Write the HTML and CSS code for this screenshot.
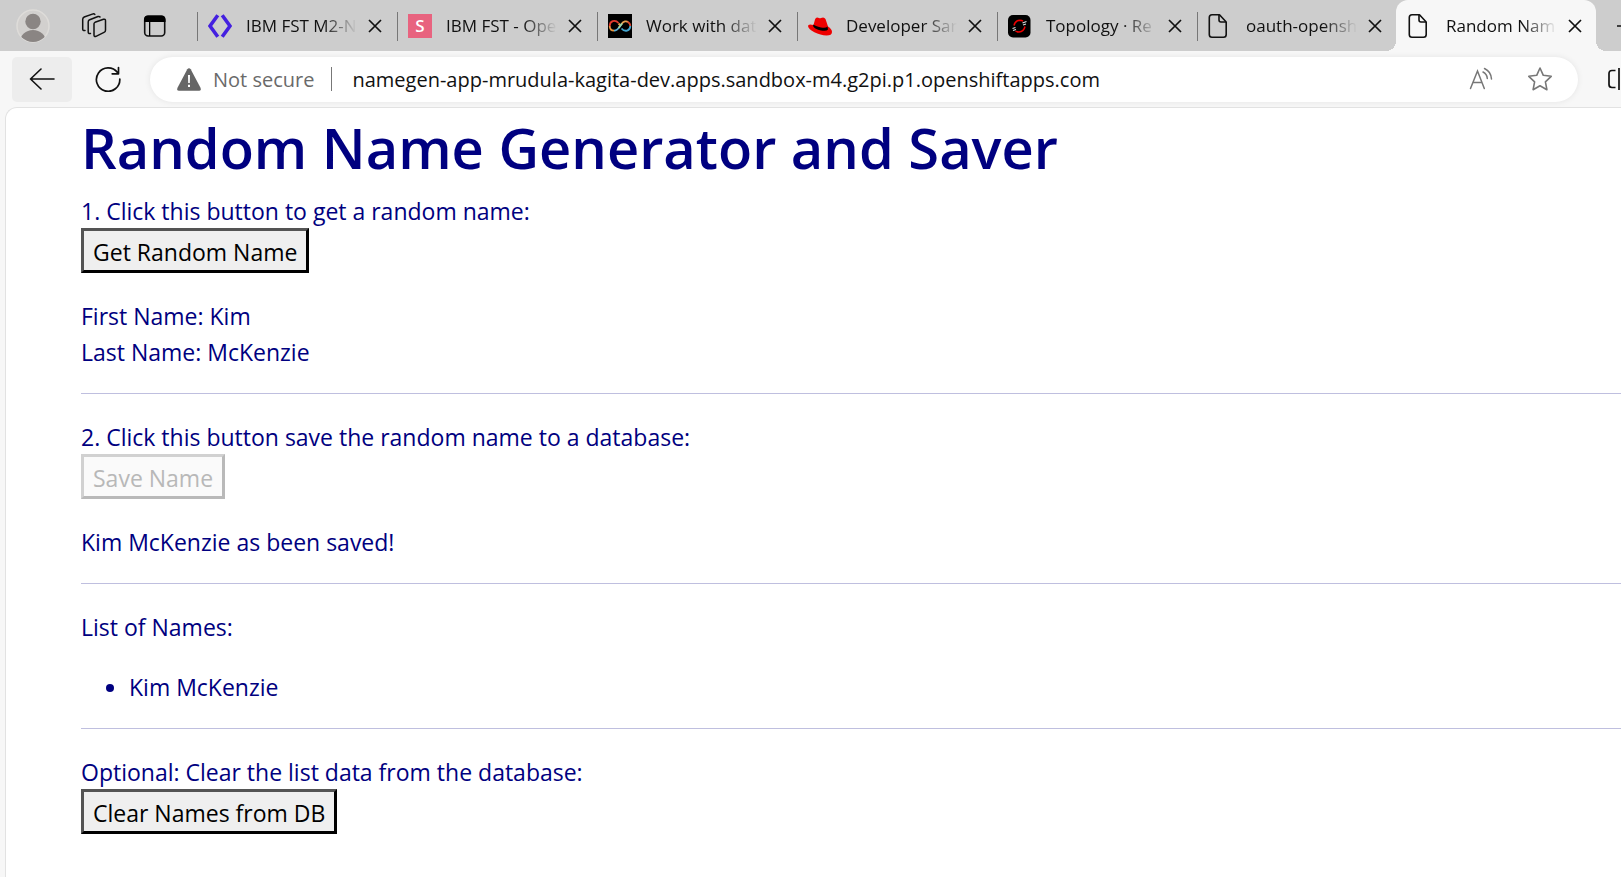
FILE: index.html
```html
<!DOCTYPE html>
<html lang="en">
<head>
<meta charset="utf-8">
<title>Random Name Generator and Saver</title>
<link rel="stylesheet" href="styles.css">
</head>
<body>
<div class="browser">
  <nav class="tabstrip" aria-label="Tabs">
    <div class="tools">
      <button class="icon-btn" aria-label="Profile">
        <svg width="34" height="34" viewBox="0 0 34 34"><defs><clipPath id="face"><circle cx="17" cy="17" r="16"/></clipPath></defs><circle cx="17" cy="17" r="16" fill="#d2d0ce" stroke="#dedcd9" stroke-width="1.5"/><g clip-path="url(#face)" fill="#8a8583"><circle cx="17" cy="12.5" r="7.7"/><ellipse cx="17" cy="33" rx="13" ry="12"/></g></svg>
      </button>
      <button class="icon-btn" aria-label="Workspaces">
        <svg width="26" height="26" viewBox="0 0 26 26" fill="none" stroke="#111" stroke-width="1.5" stroke-linejoin="round" stroke-linecap="round"><path d="M14 9.300 22.500 6.300q2-.5 2 1.400v9.500q0 1.500-1.500 2.200L15 23.300q-2 .7-2-1.200V10.800q0-1 1-1.500Z"/><path d="M9.500 20.500q-2.300.5-2.300-1.500V9q0-1.600 1.500-2.200L17 3.500q1.500-.3 2 .5"/><path d="M4 17.500q-2.300.3-2.300-1.500V6.200q0-1.500 1.500-2.200L12 .9q1.300-.2 1.800.5"/></svg>
      </button>
      <button class="icon-btn" aria-label="Tab actions">
        <svg width="24" height="24" viewBox="0 0 24 24"><rect x="1.700" y="2.300" width="20" height="19.700" rx="3.500" fill="none" stroke="#111" stroke-width="1.600"/><path d="M1 8V5.500q0-4 4-4h13.500q4 0 4 4V8ZM6 7h1.300v15H6Z" fill="#000"/></svg>
      </button>
    </div>
    <div class="tab">
      <svg class="fav" viewBox="0 0 24 24" fill="none" stroke="#4420e0" stroke-width="3.600"><path d="M9.800 1.200 2 12l7.800 10.800M14.200 1.200 22 12l-7.800 10.800"/></svg>
      <a class="title" href="#">IBM FST M2-N</a>
      <button class="close" aria-label="Close tab"><svg width="14" height="14" viewBox="0 0 14 14"><path d="m1 1 12 12M13 1 1 13"/></svg></button>
    </div>
    <div class="tab">
      <span class="fav letter">S</span>
      <a class="title" href="#">IBM FST - Ope</a>
      <button class="close" aria-label="Close tab"><svg width="14" height="14" viewBox="0 0 14 14"><path d="m1 1 12 12M13 1 1 13"/></svg></button>
    </div>
    <div class="tab">
      <svg class="fav" viewBox="0 0 24 24" fill="none" stroke-width="1.800"><path fill="#000" d="M0 0h24v24H0z"/><path stroke="#e03a2e" d="M1.700 12C1.700 7 7 5 10.500 9"/><path stroke="#e8953f" d="M1.700 12c0 3 2 4.700 4.500 4.700"/><path stroke="#5bb0d8" d="M6 16.700c4 0 6-4.700 8-7.200"/><path stroke="#e8a04f" d="M10.500 9.500 12 11M13.500 10c2-3 5-3.200 6.500-2"/><path stroke="#d8452e" d="M19.500 7.700c2 1 2.800 2.600 2.800 4.300"/><path stroke="#43a5cf" d="M22.300 12c0 5-5.500 6.300-8.800 2.500"/><path stroke="#a5d9a0" d="m10.500 14 3.500-4.500"/></svg>
      <a class="title" href="#">Work with dat</a>
      <button class="close" aria-label="Close tab"><svg width="14" height="14" viewBox="0 0 14 14"><path d="m1 1 12 12M13 1 1 13"/></svg></button>
    </div>
    <div class="tab">
      <svg class="fav" viewBox="0 0 24 24"><path fill="#e00" d="M5.500 11 7 5.500Q8 2.500 11 4q1 .7 2 0 3-1.500 4.500 1l2.500 7.500q4 2.500 4 5.500 0 3.500-5.500 3.500C11 21.500 0 16 0 12q0-2.500 5.500-1Z"/><path d="M5.500 10.500 5 12q1.500 3 8 4.500 5.500 1 7-1l-.5-3q-1.500 2-6.500 1-6-1.300-7.500-3Z"/></svg>
      <a class="title" href="#">Developer San</a>
      <button class="close" aria-label="Close tab"><svg width="14" height="14" viewBox="0 0 14 14"><path d="m1 1 12 12M13 1 1 13"/></svg></button>
    </div>
    <div class="tab">
      <svg class="fav" viewBox="0 0 24 24" fill="none"><rect y="1" width="22.500" height="22.500" rx="5" fill="#000"/><path stroke="#e00" stroke-width="1.500" d="M6 11.500Q7 6.500 12 6.300q2 0 3 1M17 12.500q-1 5-6 5.500-2 0-3.500-1"/><path stroke="#ddd" stroke-width="1.300" d="m14.500 9 4-1.500M15 11l3-1M4.500 14.500l3-1M5 16.500l3-1"/></svg>
      <a class="title" href="#">Topology · Re</a>
      <button class="close" aria-label="Close tab"><svg width="14" height="14" viewBox="0 0 14 14"><path d="m1 1 12 12M13 1 1 13"/></svg></button>
    </div>
    <div class="tab">
      <svg class="fav" viewBox="0 0 24 24" fill="none" stroke="#111" stroke-width="1.600" stroke-linejoin="round"><path d="M4 .8h7.500L18.200 8v12.500q0 2.700-2.700 2.700H4Q1.300 23.200 1.300 20.500v-17Q1.300.8 4 .8Z"/><path d="M11 1v5q0 2 2 2h5"/></svg>
      <a class="title" href="#">oauth-opensh</a>
      <button class="close" aria-label="Close tab"><svg width="14" height="14" viewBox="0 0 14 14"><path d="m1 1 12 12M13 1 1 13"/></svg></button>
    </div>
    <div class="tab active">
      <svg class="fav" viewBox="0 0 24 24" fill="none" stroke="#111" stroke-width="1.600" stroke-linejoin="round"><path d="M4 .8h7.500L18.200 8v12.500q0 2.700-2.700 2.700H4Q1.300 23.200 1.300 20.500v-17Q1.300.8 4 .8Z"/><path d="M11 1v5q0 2 2 2h5"/></svg>
      <a class="title" href="#">Random Nam</a>
      <button class="close" aria-label="Close tab"><svg width="14" height="14" viewBox="0 0 14 14"><path d="m1 1 12 12M13 1 1 13"/></svg></button>
    </div>
    <button class="new-tab" aria-label="New tab"><svg width="16" height="16" viewBox="0 0 16 16" fill="none" stroke="#111" stroke-width="1.500"><path d="M0 8h16M8 0v16"/></svg></button>
  </nav>

  <div class="toolbar">
    <button class="back" aria-label="Back"><svg width="26" height="22" viewBox="0 0 26 22" fill="none" stroke="#111" stroke-width="1.600" stroke-linecap="round" stroke-linejoin="round"><path d="M25 11H1.500M12 1 1.500 11 12 21"/></svg></button>
    <button class="reload" aria-label="Refresh"><svg width="26" height="26" viewBox="0 0 26 26" fill="none" stroke="#111" stroke-width="1.700" stroke-linecap="round" stroke-linejoin="round"><path d="M24.800 13A11.700 11.700 0 1 1 22.500 6.600M23.500 1.500v6.300h-6.300"/></svg></button>
    <form class="address">
      <svg class="warn" width="24" height="23" viewBox="0 0 24 23"><path fill="#666" d="M10.300 1.300q1.700-2.200 3.400 0l9.800 18.500q1 2.800-1.500 3H2q-2.500-.2-1.500-3Z"/><path fill="#fff" d="M11 7h2l-.2 8h-1.600Zm0 9.800h2V19h-2Z"/></svg>
      <label class="secure" for="url">Not secure</label>
      <span class="bar"></span>
      <input class="url" id="url" value="namegen-app-mrudula-kagita-dev.apps.sandbox-m4.g2pi.p1.openshiftapps.com">
      <button type="button" class="icon-btn" aria-label="Read aloud"><svg width="24" height="24" viewBox="0 0 24 24" fill="none" stroke="#777" stroke-width="1.500" stroke-linecap="round"><path d="M1.500 21.500 8.500 4l6.800 17.500M4 15.500h9M14 5q4 2 4.300 6.500M15.500 1.500q6.500 3 7 10.500"/></svg></button>
      <button type="button" class="icon-btn" aria-label="Add to favorites"><svg width="26" height="26" viewBox="0 0 26 26" fill="none" stroke="#777" stroke-width="1.600" stroke-linejoin="round"><path d="m13 2 3.300 7.300 7.900 1-5.800 5.500 1.500 7.900-6.900-3.900-6.900 3.900 1.500-7.900L1.800 10.300l7.900-1Z"/></svg></button>
    </form>
    <button class="split" aria-label="Split screen"><svg width="26" height="24" viewBox="0 0 26 24" fill="none" stroke="#111" stroke-width="1.700"><path d="M7.500 3.500H4Q1 3.500 1 6.500v11q0 3 3 3h3.500M11 1v22M14 3.500h7q3 0 3 3v11q0 3-3 3h-7"/></svg></button>
  </div>

  <main class="page">
    <h1>Random Name Generator and Saver</h1>
    <section>
      <p class="prompt">1. Click this button to get a random name:</p>
      <button class="action">Get Random Name</button>
      <p class="result">First Name: Kim<br>Last Name: McKenzie</p>
    </section>
    <section>
      <p class="prompt">2. Click this button save the random name to a database:</p>
      <button class="action" disabled>Save Name</button>
      <p class="result">Kim McKenzie as been saved!</p>
    </section>
    <section>
      <p class="prompt">List of Names:</p>
      <ul class="result names"><li>Kim McKenzie</li></ul>
    </section>
    <section>
      <p class="prompt">Optional: Clear the list data from the database:</p>
      <button class="action">Clear Names from DB</button>
    </section>
  </main>
</div>
</body>
</html>
```
FILE: styles.css
```css
* { box-sizing: border-box; }
body {
  margin: 0;
  background: #f7f7f7;
  color: #111;
  font-family: "Open Sans", "Noto Sans", sans-serif;
}
button { font-family: inherit; color: inherit; }
svg { display: block; flex: none; }

.browser {
  min-height: 100vh;
  display: flex;
  flex-direction: column;
  overflow: hidden;
}
.icon-btn, .close, .new-tab, .back, .reload, .split {
  display: flex;
  align-items: center;
  justify-content: center;
  flex: none;
  padding: 0;
  border: 0;
  background: none;
}

.tabstrip {
  display: flex;
  height: 51px;
  background: #cdcdcd;
}
.tools {
  flex: none;
  display: flex;
  align-items: center;
  gap: 27px;
  width: 196px;
  padding-left: 16px;
}
.tools .icon-btn { width: 34px; }
.tab {
  position: relative;
  flex: none;
  display: flex;
  align-items: center;
  width: 200px;
  padding: 0 14px 0 12px;
}
.tab::before {
  content: "";
  position: absolute;
  left: 1px;
  top: 12px;
  width: 1px;
  height: 29px;
  background: #777;
}
.tab.active {
  background: #f7f7f7;
  border-radius: 12px 12px 0 0;
}
.tab.active::before,
.tab.active::after {
  content: "";
  position: absolute;
  top: auto;
  bottom: 0;
  width: 10px;
  height: 10px;
}
.tab.active::before {
  left: -10px;
  background: radial-gradient(circle at 0 0, #cdcdcd 10px, #f7f7f7 10px);
}
.tab.active::after {
  right: -10px;
  background: radial-gradient(circle at 100% 0, #cdcdcd 10px, #f7f7f7 10px);
}
.fav { flex: none; width: 24px; height: 24px; }
.letter {
  background: #e8637f;
  color: #fff;
  font-size: 17px;
  font-weight: 600;
  line-height: 24px;
  text-align: center;
}
.title {
  flex: 1;
  min-width: 0;
  margin: 0 4px 0 14px;
  overflow: hidden;
  white-space: nowrap;
  color: #111;
  font-size: 17px;
  line-height: 28px;
  text-decoration: none;
  mask-image: linear-gradient(to right, #000 65%, transparent 94%);
}
.close path { stroke: #111; stroke-width: 1.7; }
.new-tab { margin-left: 21px; }

.toolbar {
  display: flex;
  align-items: center;
  height: 56px;
  padding-left: 12px;
}
.back {
  width: 60px;
  height: 45px;
  border-radius: 5px;
  background: #ededed;
}
.reload { margin: 0 29px 0 23px; }
.address {
  flex: 1;
  min-width: 0;
  display: flex;
  align-items: center;
  height: 45px;
  padding: 0 25px 0 27px;
  border-radius: 23px;
  background: #fff;
  box-shadow: 0 0 6px rgba(0, 0, 0, .08);
}
.secure {
  flex: none;
  margin-left: 12px;
  color: #6a6a6a;
  font-size: 20px;
}
.bar {
  flex: none;
  width: 1px;
  height: 24px;
  margin: 0 20px 0 17px;
  background: #777;
}
.url {
  flex: 1;
  min-width: 0;
  padding: 0;
  border: 0;
  outline: 0;
  background: none;
  color: #111;
  font-family: inherit;
  font-size: 20px;
}
.address .icon-btn { margin-left: 34px; }
.split { width: 43px; padding-left: 30px; justify-content: flex-start; overflow: hidden; }

.page {
  flex: 1;
  margin-left: 5px;
  padding: 3px 0 24px 75px;
  border-top: 1px solid #e2e2e2;
  border-left: 1px solid #e2e2e2;
  border-top-left-radius: 12px;
  background: #fff;
  color: navy;
  font-size: 23px;
  line-height: 36px;
}
h1 {
  margin: 0 0 11px;
  font-size: 56px;
  font-weight: 600;
  line-height: 72px;
}
section + section {
  margin-top: 23px;
  padding-top: 26px;
  border-top: 1px solid #bfbfdf;
}
.prompt { margin: 0; line-height: 34px; }
.action {
  display: block;
  height: 45px;
  padding: 2px 9px 0;
  border: 3px outset #000;
  background: #efefef;
  color: #000;
  font-size: 23px;
  line-height: 36px;
}
.action:disabled {
  border-color: #d1d1d1 #b9b9b9 #b9b9b9 #d1d1d1;
  border-style: solid;
  background: #fafafa;
  color: #b8b8b8;
}
.result { margin: 25px 0 0; }
.names { padding-left: 48px; }
```
